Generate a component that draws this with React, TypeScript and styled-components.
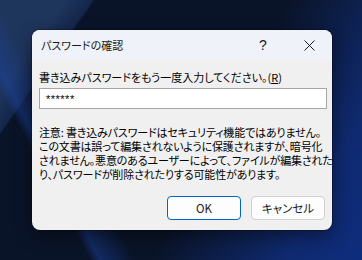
import styled, { createGlobalStyle } from "styled-components";

const GlobalStyle = createGlobalStyle`
  html, body {
    margin: 0;
    padding: 0;
  }
  body {
    font-family: "Noto Sans CJK JP", "Noto Sans", sans-serif;
    font-feature-settings: "palt";
  }
`;

const Desktop = styled.div`
  position: relative;
  width: 362px;
  height: 260px;
  overflow: hidden;
  box-sizing: border-box;
  padding: 30px 30px 0 32px;
  background:
    linear-gradient(118deg, transparent 0 58%, rgba(20, 60, 170, 0.55) 85%, rgba(15, 55, 160, 0.7) 100%),
    linear-gradient(62deg, transparent 0 18%, rgba(30, 70, 170, 0.45) 20%, transparent 27%),
    linear-gradient(125deg, #1e355c 0 12%, #14264a 17%, transparent 17.5%),
    #0a1429;
`;

const Dialog = styled.div`
  width: 300px;
  height: 200px;
  background: #f0f0f0;
  border-radius: 8px;
  overflow: hidden;
  box-shadow: 0 0 0 1px rgba(0, 0, 0, 0.25), 0 6px 18px rgba(0, 0, 0, 0.45);
  display: flex;
  flex-direction: column;
`;

const TitleBar = styled.div`
  height: 30px;
  background: #eff2f9;
  display: flex;
  align-items: center;
  padding-left: 9px;
  color: #1a1a1a;
`;

const Title = styled.div`
  flex: 1;
  font-size: 11px;
`;

const TitleButton = styled.div`
  width: 46px;
  height: 30px;
  display: flex;
  align-items: center;
  justify-content: center;
  font-size: 14px;
  font-family: "Liberation Sans", sans-serif;
  color: #1a1a1a;
`;

const Body = styled.div`
  flex: 1;
  padding: 9px 6px 0 7px;
  display: flex;
  flex-direction: column;
`;

const Prompt = styled.div`
  font-size: 11px;
  line-height: 16px;
  color: #000;
  white-space: nowrap;
`;

const Key = styled.span`
  text-decoration: underline;
`;

const Field = styled.div`
  margin-top: 3px;
  height: 21px;
  width: 288px;
  box-sizing: border-box;
  border: 1px solid #a6a6a6;
  background: #fff;
  display: flex;
  align-items: center;
  padding-left: 6px;
  font-family: "Liberation Sans", sans-serif;
  font-size: 11px;
  letter-spacing: 0.5px;
  color: #000;
`;

const Note = styled.div`
  margin-top: 16px;
  font-size: 11px;
  line-height: 14px;
  letter-spacing: -0.15px;
  color: #000;
  white-space: nowrap;
`;

const Actions = styled.div`
  margin-top: auto;
  margin-bottom: 10px;
  display: flex;
  justify-content: flex-end;
  gap: 10px;
  padding-right: 1px;
`;

const Button = styled.div<{ $primary?: boolean }>`
  width: 74px;
  height: 24px;
  box-sizing: border-box;
  border-radius: 4px;
  border: 1px solid ${(p) => (p.$primary ? "#0067c0" : "#d0d0d0")};
  background: #fdfdfd;
  display: flex;
  align-items: center;
  justify-content: center;
  font-size: 11.5px;
  color: #1a1a1a;
`;

function CloseIcon() {
  return (
    <svg width="11" height="11" viewBox="0 0 11 11">
      <path d="M0.5 0.5 L10.5 10.5 M10.5 0.5 L0.5 10.5" stroke="#1a1a1a" strokeWidth="1" />
    </svg>
  );
}

export default function App() {
  return (
    <>
      <GlobalStyle />
      <Desktop>
        <Dialog>
          <TitleBar>
            <Title>パスワードの確認</Title>
            <TitleButton>?</TitleButton>
            <TitleButton>
              <CloseIcon />
            </TitleButton>
          </TitleBar>
          <Body>
            <Prompt>
              書き込みパスワードをもう一度入力してください。(<Key>R</Key>)
            </Prompt>
            <Field>******</Field>
            <Note>
              注意: 書き込みパスワードはセキュリティ機能ではありません。
              <br />
              この文書は誤って編集されないように保護されますが、暗号化
              <br />
              されません。悪意のあるユーザーによって、ファイルが編集された
              <br />
              り、パスワードが削除されたりする可能性があります。
            </Note>
            <Actions>
              <Button $primary>OK</Button>
              <Button>キャンセル</Button>
            </Actions>
          </Body>
        </Dialog>
      </Desktop>
    </>
  );
}
